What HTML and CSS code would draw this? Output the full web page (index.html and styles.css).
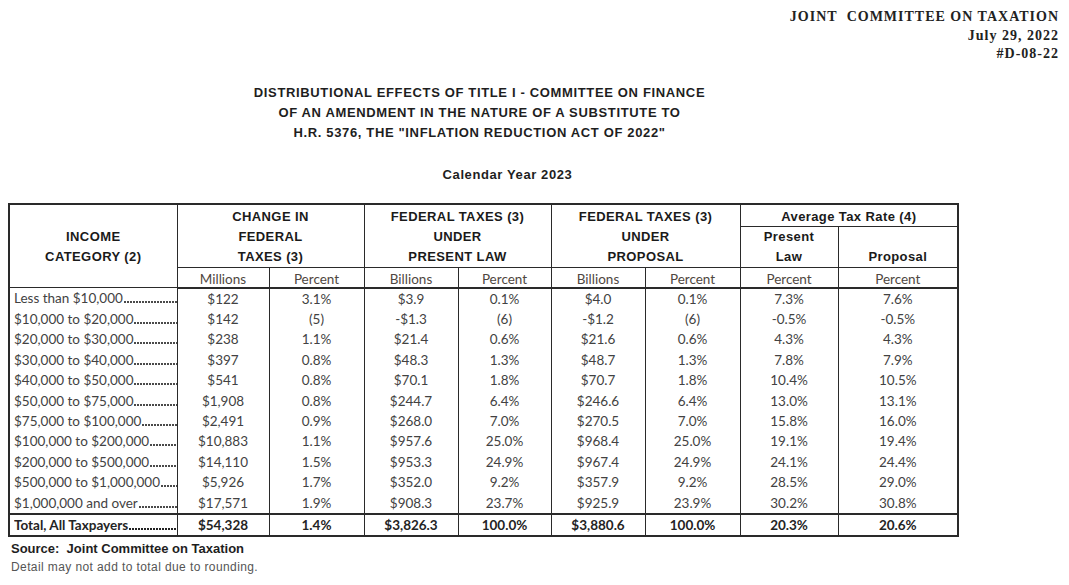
FILE: index.html
```html
<!DOCTYPE html>
<html lang="en">
<head>
<meta charset="utf-8">
<title>Distributional Effects - JCT</title>
<link rel="stylesheet" href="styles.css">
</head>
<body>
<header class="jct">
  <div>JOINT&nbsp; COMMITTEE ON TAXATION</div>
  <div>July 29, 2022</div>
  <div>#D-08-22</div>
</header>
<main class="report">
  <h1 class="title">DISTRIBUTIONAL EFFECTS OF TITLE I - COMMITTEE ON FINANCE<br>OF AN AMENDMENT IN THE NATURE OF A SUBSTITUTE TO<br>H.R. 5376, THE "INFLATION REDUCTION ACT OF 2022"</h1>
  <p class="year">Calendar Year 2023</p>
  <table class="dist">
    <colgroup>
      <col class="c-cat">
      <col class="c-a"><col class="c-b">
      <col class="c-c"><col class="c-d">
      <col class="c-e"><col class="c-f">
      <col class="c-g"><col class="c-h">
    </colgroup>
    <thead>
      <tr class="hr1">
        <th rowspan="3" class="grp">INCOME<br>CATEGORY (2)</th>
        <th colspan="2" rowspan="2" class="grp">CHANGE IN<br>FEDERAL<br>TAXES (3)</th>
        <th colspan="2" rowspan="2" class="grp">FEDERAL TAXES (3)<br>UNDER<br>PRESENT LAW</th>
        <th colspan="2" rowspan="2" class="grp">FEDERAL TAXES (3)<br>UNDER<br>PROPOSAL</th>
        <th colspan="2" class="grp atr">Average Tax Rate (4)</th>
      </tr>
      <tr class="hr2">
        <th class="sub">Present<br>Law</th>
        <th class="sub">Proposal</th>
      </tr>
      <tr class="hr3">
        <th class="unit">Millions</th><th class="unit">Percent</th>
        <th class="unit">Billions</th><th class="unit">Percent</th>
        <th class="unit">Billions</th><th class="unit">Percent</th>
        <th class="unit">Percent</th><th class="unit">Percent</th>
      </tr>
    </thead>
    <tbody>
      <tr><td class="cat"><div class="leader"><span>Less than $10,000</span><i class="dots"></i></div></td><td>$122</td><td>3.1%</td><td>$3.9</td><td>0.1%</td><td>$4.0</td><td>0.1%</td><td>7.3%</td><td>7.6%</td></tr>
      <tr><td class="cat"><div class="leader"><span>$10,000 to $20,000</span><i class="dots"></i></div></td><td>$142</td><td>(5)</td><td>-$1.3</td><td>(6)</td><td>-$1.2</td><td>(6)</td><td>-0.5%</td><td>-0.5%</td></tr>
      <tr><td class="cat"><div class="leader"><span>$20,000 to $30,000</span><i class="dots"></i></div></td><td>$238</td><td>1.1%</td><td>$21.4</td><td>0.6%</td><td>$21.6</td><td>0.6%</td><td>4.3%</td><td>4.3%</td></tr>
      <tr><td class="cat"><div class="leader"><span>$30,000 to $40,000</span><i class="dots"></i></div></td><td>$397</td><td>0.8%</td><td>$48.3</td><td>1.3%</td><td>$48.7</td><td>1.3%</td><td>7.8%</td><td>7.9%</td></tr>
      <tr><td class="cat"><div class="leader"><span>$40,000 to $50,000</span><i class="dots"></i></div></td><td>$541</td><td>0.8%</td><td>$70.1</td><td>1.8%</td><td>$70.7</td><td>1.8%</td><td>10.4%</td><td>10.5%</td></tr>
      <tr><td class="cat"><div class="leader"><span>$50,000 to $75,000</span><i class="dots"></i></div></td><td>$1,908</td><td>0.8%</td><td>$244.7</td><td>6.4%</td><td>$246.6</td><td>6.4%</td><td>13.0%</td><td>13.1%</td></tr>
      <tr><td class="cat"><div class="leader"><span>$75,000 to $100,000</span><i class="dots"></i></div></td><td>$2,491</td><td>0.9%</td><td>$268.0</td><td>7.0%</td><td>$270.5</td><td>7.0%</td><td>15.8%</td><td>16.0%</td></tr>
      <tr><td class="cat"><div class="leader"><span>$100,000 to $200,000</span><i class="dots"></i></div></td><td>$10,883</td><td>1.1%</td><td>$957.6</td><td>25.0%</td><td>$968.4</td><td>25.0%</td><td>19.1%</td><td>19.4%</td></tr>
      <tr><td class="cat"><div class="leader"><span>$200,000 to $500,000</span><i class="dots"></i></div></td><td>$14,110</td><td>1.5%</td><td>$953.3</td><td>24.9%</td><td>$967.4</td><td>24.9%</td><td>24.1%</td><td>24.4%</td></tr>
      <tr><td class="cat"><div class="leader"><span>$500,000 to $1,000,000</span><i class="dots"></i></div></td><td>$5,926</td><td>1.7%</td><td>$352.0</td><td>9.2%</td><td>$357.9</td><td>9.2%</td><td>28.5%</td><td>29.0%</td></tr>
      <tr><td class="cat"><div class="leader"><span>$1,000,000 and over</span><i class="dots"></i></div></td><td>$17,571</td><td>1.9%</td><td>$908.3</td><td>23.7%</td><td>$925.9</td><td>23.9%</td><td>30.2%</td><td>30.8%</td></tr>
    </tbody>
    <tfoot>
      <tr class="total"><td class="cat"><div class="leader"><span>Total, All Taxpayers</span><i class="dots"></i></div></td><td>$54,328</td><td>1.4%</td><td>$3,826.3</td><td>100.0%</td><td>$3,880.6</td><td>100.0%</td><td>20.3%</td><td>20.6%</td></tr>
    </tfoot>
  </table>
  <p class="source">Source:&nbsp; Joint Committee on Taxation</p>
  <p class="note">Detail may not add to total due to rounding.</p>
</main>
</body>
</html>
```

FILE: styles.css
```css
html, body {
  margin: 0;
  padding: 0;
  background: #ffffff;
}

body {
  font-family: "Liberation Sans", Arial, sans-serif;
  color: #1c1c1c;
}

.jct {
  padding: 8px 10px 0 0;
  text-align: right;
  font-family: "Liberation Serif", "Times New Roman", serif;
  font-weight: bold;
  font-size: 14px;
  letter-spacing: 1px;
  line-height: 18.5px;
  color: #222222;
}

.report {
  width: 949px;
  margin-left: 8px;
}

.title {
  margin: 19px 0 0 0;
  padding-right: 6px;
  text-align: center;
  font-size: 13px;
  font-weight: bold;
  letter-spacing: 0.65px;
  line-height: 20px;
  color: #1e1e1e;
}

.year {
  margin: 22px 0 0 0;
  padding-left: 50px;
  text-align: center;
  font-size: 13px;
  font-weight: bold;
  letter-spacing: 0.6px;
  line-height: 20px;
  color: #1e1e1e;
}

.dist {
  margin-top: 18px;
  width: 949px;
  table-layout: fixed;
  border-collapse: collapse;
  border: 2px solid #2a2a2a;
}

.c-cat { width: 168px; }
.c-a { width: 92px; }
.c-b { width: 95px; }
.c-c { width: 94px; }
.c-d { width: 93px; }
.c-e { width: 94px; }
.c-f { width: 95px; }
.c-g { width: 98px; }
.c-h { width: 120px; }

.dist th,
.dist td {
  padding: 0;
  border-left: 1px solid #2a2a2a;
  border-right: 1px solid #2a2a2a;
  text-align: center;
  white-space: nowrap;
}

.dist th {
  font-family: "Liberation Sans", Arial, sans-serif;
  font-weight: bold;
  font-size: 13px;
  letter-spacing: 0.4px;
  line-height: 20px;
  color: #1a1a1a;
}

.hr1 { height: 22px; }
.hr2 { height: 40px; }
.hr3 { height: 19px; }

.grp {
  vertical-align: middle;
  border-bottom: 1px solid #2a2a2a;
}

.dist th.grp {
  padding-top: 2px;
}

.dist th.atr {
  padding-top: 2px;
  line-height: 19px;
}

.dist th.sub {
  vertical-align: bottom;
  border-bottom: 1px solid #2a2a2a;
  line-height: 20px;
}

.dist th.unit {
  padding-top: 3px;
  font-family: Lato, "Open Sans", sans-serif;
  font-weight: normal;
  font-size: 13.5px;
  letter-spacing: 0;
  line-height: 16px;
  color: #4f4741;
  border-bottom: 2px solid #2a2a2a;
}

.dist td {
  height: 20.4px;
  font-family: Lato, "Open Sans", sans-serif;
  font-size: 13.5px;
  line-height: 20px;
  color: #424242;
  vertical-align: middle;
}

.dist td.cat {
  text-align: left;
  padding-left: 4px;
}

.leader {
  display: flex;
  align-items: flex-end;
  overflow: hidden;
}

.leader span {
  flex: none;
}

.dots {
  flex: 1;
  height: 2px;
  margin: 0 0 5px 1px;
  background-image: radial-gradient(circle at 1px 1px, #4a4a4a 0.75px, rgba(255, 255, 255, 0) 1.15px);
  background-size: 3px 2px;
  background-repeat: repeat-x;
}

.total td {
  height: 19px;
  border-top: 2px solid #2a2a2a;
  font-weight: bold;
  color: #242424;
}

.total .dots {
  background-image: radial-gradient(circle at 1px 1px, #222222 0.9px, rgba(255, 255, 255, 0) 1.25px);
}

.source {
  margin: 3px 0 0 3px;
  font-size: 13px;
  font-weight: bold;
  line-height: 18px;
  color: #1e1e1e;
}

.note {
  margin: 0 0 0 3px;
  font-size: 12px;
  letter-spacing: 0.4px;
  line-height: 18px;
  color: #555555;
}
```
